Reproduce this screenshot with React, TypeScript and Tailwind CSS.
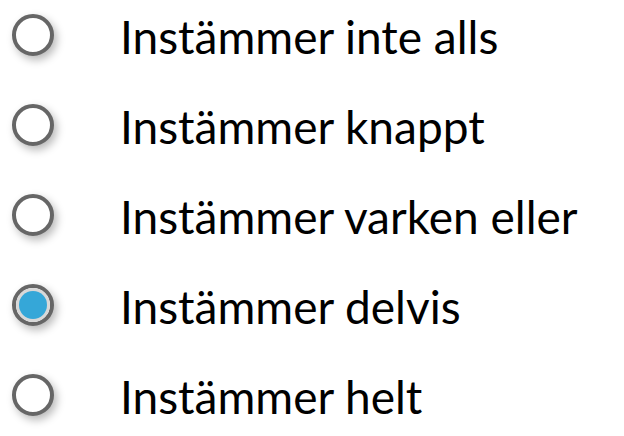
import React from "react";

const options = [
  "Instämmer inte alls",
  "Instämmer knappt",
  "Instämmer varken eller",
  "Instämmer delvis",
  "Instämmer helt",
];

const Radio = ({ checked }: { checked: boolean }) => (
  <div className="flex h-[42px] w-[42px] shrink-0 items-center justify-center rounded-full border-[4px] border-[#666666] bg-white shadow-[3px_4px_8px_rgba(0,0,0,0.28)]">
    {checked && (
      <div className="flex h-[34px] w-[34px] items-center justify-center rounded-full bg-[#d8d8d8]">
        <div className="h-[28px] w-[28px] rounded-full bg-[#35a7d8]" />
      </div>
    )}
  </div>
);

export default function App() {
  const selected = 3;
  return (
    <div className="flex h-[436px] w-[624px] flex-col gap-[48px] overflow-hidden bg-white pl-[12px] pt-[14px] font-['Lato',sans-serif] text-black">
      {options.map((label, i) => (
        <label key={label} className="flex h-[42px] items-center gap-[66px]">
          <Radio checked={i === selected} />
          <span className="mt-[3px] text-[46px] font-normal leading-none">{label}</span>
        </label>
      ))}
    </div>
  );
}
